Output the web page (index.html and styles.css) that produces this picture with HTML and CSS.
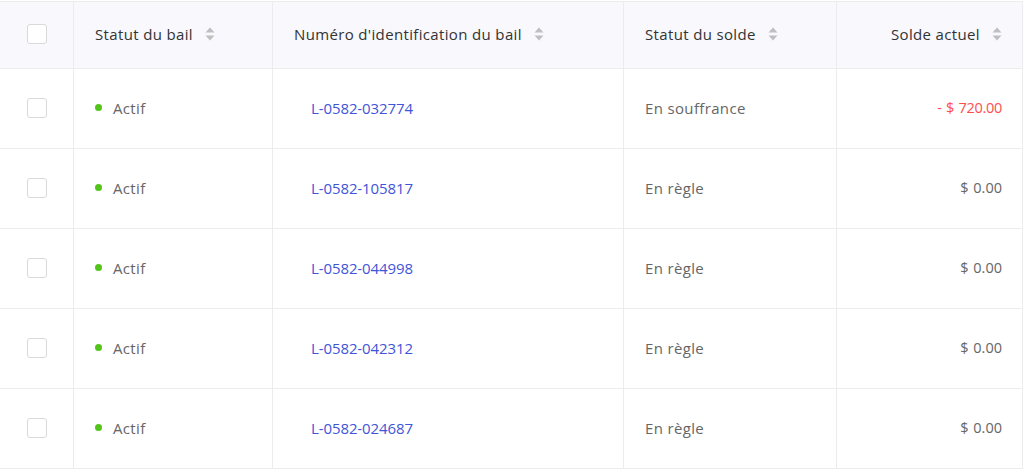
FILE: index.html
```html
<!DOCTYPE html>
<html lang="fr">
<head>
<meta charset="utf-8">
<link rel="stylesheet" href="styles.css">
</head>
<body>
<div class="table">
  <div class="th check"><span class="box"></span></div>
  <div class="th">Statut du bail<svg class="sort" viewBox="0 0 10 14"><path d="M5 0.5L9.5 5.5H0.5Z"/><path d="M5 13.5L9.5 8.5H0.5Z"/></svg></div>
  <div class="th">Numéro d'identification du bail<svg class="sort" viewBox="0 0 10 14"><path d="M5 0.5L9.5 5.5H0.5Z"/><path d="M5 13.5L9.5 8.5H0.5Z"/></svg></div>
  <div class="th">Statut du solde<svg class="sort" viewBox="0 0 10 14"><path d="M5 0.5L9.5 5.5H0.5Z"/><path d="M5 13.5L9.5 8.5H0.5Z"/></svg></div>
  <div class="th right">Solde actuel<svg class="sort" viewBox="0 0 10 14"><path d="M5 0.5L9.5 5.5H0.5Z"/><path d="M5 13.5L9.5 8.5H0.5Z"/></svg></div>

  <div class="td check"><span class="box"></span></div>
  <div class="td"><span class="dot"></span>Actif</div>
  <div class="td"><a class="lease">L-0582-032774</a></div>
  <div class="td">En souffrance</div>
  <div class="td right amount neg">- $ 720.00</div>

  <div class="td check"><span class="box"></span></div>
  <div class="td"><span class="dot"></span>Actif</div>
  <div class="td"><a class="lease">L-0582-105817</a></div>
  <div class="td">En règle</div>
  <div class="td right amount">$ 0.00</div>

  <div class="td check"><span class="box"></span></div>
  <div class="td"><span class="dot"></span>Actif</div>
  <div class="td"><a class="lease">L-0582-044998</a></div>
  <div class="td">En règle</div>
  <div class="td right amount">$ 0.00</div>

  <div class="td check"><span class="box"></span></div>
  <div class="td"><span class="dot"></span>Actif</div>
  <div class="td"><a class="lease">L-0582-042312</a></div>
  <div class="td">En règle</div>
  <div class="td right amount">$ 0.00</div>

  <div class="td check"><span class="box"></span></div>
  <div class="td"><span class="dot"></span>Actif</div>
  <div class="td"><a class="lease">L-0582-024687</a></div>
  <div class="td">En règle</div>
  <div class="td right amount">$ 0.00</div>
</div>
</body>
</html>
```

FILE: styles.css
```css
* { box-sizing: border-box; }
html, body { margin: 0; padding: 0; background: #fff; }
body {
  padding-top: 1px;
  font-family: "Open Sans", "Noto Sans", sans-serif;
  font-size: 15px;
  letter-spacing: 0.35px;
  color: #666;
}
.table {
  display: grid;
  grid-template-columns: 74px 199px 351px 213px 186px;
  width: 1023px;
  border-top: 1px solid #ececec;
}
.th, .td {
  display: flex;
  align-items: center;
  padding: 0 20px 2px 21px;
  border-right: 1px solid #ececec;
  border-bottom: 1px solid #ececec;
}
.th {
  height: 67px;
  background: #f8f8fd;
  color: #333;
}
.td { height: 80px; }
.check { justify-content: center; padding: 0 0 2px 0; }
.right { justify-content: flex-end; }
.box {
  width: 20px;
  height: 20px;
  border: 1px solid #d9d9d9;
  border-radius: 3px;
  background: #fff;
}
.sort {
  width: 10px;
  height: 14px;
  margin-left: 12px;
  fill: #bfbfbf;
  flex: none;
}
.dot {
  width: 7px;
  height: 7px;
  border-radius: 50%;
  background: #52c41a;
  margin-right: 11px;
}
.lease {
  color: #4155d8;
  padding-left: 17px;
  letter-spacing: -0.1px;
  text-decoration: none;
}
.amount {
  font-size: 14.5px;
  letter-spacing: 0;
  word-spacing: 1px;
}
.neg { color: #ff4d4f; letter-spacing: -0.3px; }
```
